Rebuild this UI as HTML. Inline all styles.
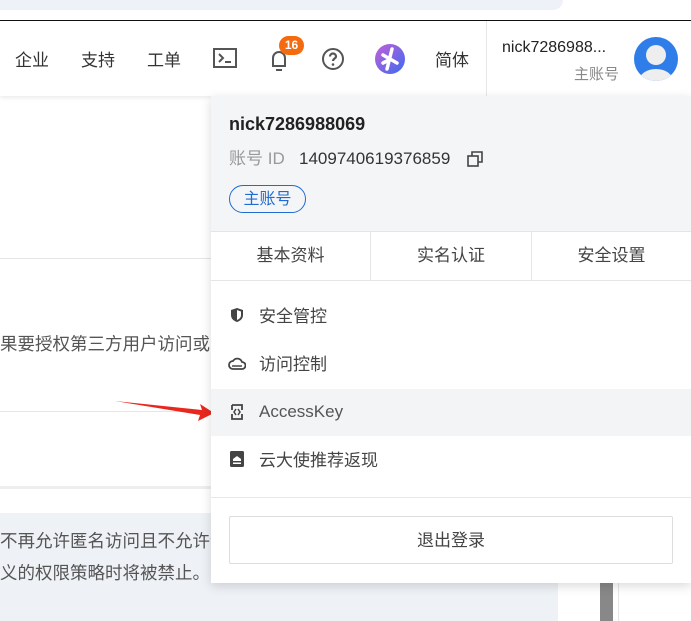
<!DOCTYPE html>
<html><head><meta charset="utf-8"><style>
*{margin:0;padding:0;box-sizing:border-box}
body{width:691px;height:621px;overflow:hidden;background:#fff;font-family:"Liberation Sans","Noto Sans CJK SC",sans-serif;position:relative;color:#333}
.a{position:absolute;line-height:1.2;white-space:nowrap}
.nav{font-size:17px;color:#333;top:51px}
</style></head><body>
<div class="a" style="left:0;top:0;width:563px;height:10px;background:#eef1f8;border-radius:0 0 12px 0"></div>
<div class="a" style="left:0;top:20px;width:691px;height:1px;background:#111"></div>
<div class="a" style="left:0;top:21px;width:691px;height:75px;background:#fff;box-shadow:0 2px 4px rgba(0,0,0,.08)"></div>
<div class="a nav" style="left:15px">企业</div>
<div class="a nav" style="left:81px">支持</div>
<div class="a nav" style="left:147px">工单</div>
<svg class="a" style="left:213px;top:48px" width="24" height="20" viewBox="0 0 24 20"><rect x="1" y="1" width="22" height="18" fill="none" stroke="#555" stroke-width="2"/><path d="M6 6l4 4-4 4M12 14h6" fill="none" stroke="#555" stroke-width="2"/></svg>
<svg class="a" style="left:269px;top:48px" width="20" height="24" viewBox="0 0 20 24"><path d="M4 18V10a6 6 0 0112 0v8H3h14" fill="none" stroke="#555" stroke-width="2"/><path d="M7 22h6" stroke="#555" stroke-width="2"/></svg>
<div class="a" style="left:279px;top:36px;width:25px;height:19px;border-radius:10px;background:#f36b0e;color:#fff;font-size:12px;font-weight:bold;text-align:center;line-height:19px">16</div>
<svg class="a" style="left:321px;top:47px" width="24" height="24" viewBox="0 0 24 24"><circle cx="12" cy="12" r="10" fill="none" stroke="#555" stroke-width="2"/><path d="M9 9.5a3 3 0 116 0c0 2-3 2-3 4.5" fill="none" stroke="#555" stroke-width="2.2"/><circle cx="12" cy="17.5" r="1.3" fill="#555"/></svg>
<svg class="a" style="left:375px;top:44px" width="30" height="30" viewBox="0 0 30 30"><defs><linearGradient id="g" x1="0" y1="0" x2="1" y2="1"><stop offset="0" stop-color="#c55ed8"/><stop offset="1" stop-color="#3a6cf0"/></linearGradient></defs><circle cx="15" cy="15" r="15" fill="url(#g)"/><path d="M17 5l-5 20M8 11l14 8M8 19l6-3" stroke="#fff" stroke-width="3.5" stroke-linecap="round"/></svg>
<div class="a nav" style="left:435px">简体</div>
<div class="a" style="left:486px;top:21px;width:1px;height:75px;background:#e8e8e8"></div>
<div class="a" style="left:502px;top:38px;font-size:16px;color:#222">nick7286988...</div>
<div class="a" style="left:574px;top:66px;font-size:15px;color:#888">主账号</div>
<svg class="a" style="left:634px;top:37px" width="44" height="44" viewBox="0 0 44 44"><defs><clipPath id="c"><circle cx="22" cy="22" r="22"/></clipPath></defs><circle cx="22" cy="22" r="22" fill="#2f7de9"/><g clip-path="url(#c)"><circle cx="22" cy="18" r="10" fill="#eee"/><ellipse cx="22" cy="44" rx="17" ry="12" fill="#eee"/></g></svg>

<div class="a" style="left:0;top:258px;width:211px;height:1px;background:#e5e5e5"></div>
<div class="a" style="left:0;top:334px;font-size:17.5px;color:#555">果要授权第三方用户访问或</div>
<div class="a" style="left:0;top:411px;width:211px;height:1px;background:#e5e5e5"></div>
<div class="a" style="left:0;top:486px;width:211px;height:3px;background:#eee"></div>
<div class="a" style="left:0;top:513px;width:558px;height:108px;background:#eef1f6"></div>
<div class="a" style="left:0;top:525px;font-size:17.5px;color:#555;line-height:32px">不再允许匿名访问且不允许创<br>义的权限策略时将被禁止。下</div>
<div class="a" style="left:600px;top:583px;width:13px;height:38px;background:#888"></div>
<div class="a" style="left:618px;top:583px;width:1px;height:38px;background:#e5e5e5"></div>
<svg class="a" style="left:110px;top:395px" width="105" height="30" viewBox="0 0 105 30"><path d="M5 6L92 15 90 9 104 18 88 26 90 20Z" fill="#e8281e"/></svg>

<div class="a" style="left:211px;top:96px;width:480px;height:487px;background:#fff;box-shadow:0 3px 10px rgba(0,0,0,.15)">
 <div class="a" style="left:0;top:0;width:480px;height:135px;background:#f4f5f7"></div>
 <div class="a" style="left:18px;top:18px;font-size:18px;font-weight:bold;color:#222">nick7286988069</div>
 <div class="a" style="left:18px;top:53px;font-size:17px;color:#999">账号 ID</div>
 <div class="a" style="left:88px;top:53px;font-size:17px;color:#333">1409740619376859</div>
 <svg class="a" style="left:256px;top:55px" width="16" height="16" viewBox="0 0 16 16"><rect x="1" y="5" width="10" height="10" fill="none" stroke="#444" stroke-width="1.6"/><path d="M5 5V1h10v10h-4" fill="none" stroke="#444" stroke-width="1.6"/></svg>
 <div class="a" style="left:18px;top:89px;width:77px;height:28px;border:1.3px solid #1f6bd1;border-radius:14px;color:#1f6bd1;font-size:16px;text-align:center;line-height:27px">主账号</div>
 <div class="a" style="left:0;top:135px;width:480px;height:50px;border-top:1px solid #e5e5e5;border-bottom:1px solid #e5e5e5"></div>
 <div class="a" style="left:159px;top:135px;width:1px;height:50px;background:#e5e5e5"></div>
 <div class="a" style="left:320px;top:135px;width:1px;height:50px;background:#e5e5e5"></div>
 <div class="a" style="left:0;top:150px;width:159px;text-align:center;font-size:17px;color:#444">基本资料</div>
 <div class="a" style="left:160px;top:150px;width:160px;text-align:center;font-size:17px;color:#444">实名认证</div>
 <div class="a" style="left:321px;top:150px;width:159px;text-align:center;font-size:17px;color:#444">安全设置</div>
 <svg class="a" style="left:18px;top:211px" width="16" height="16" viewBox="0 0 16 16"><path d="M8 1l6 2v5c0 4-3 6-6 7-3-1-6-3-6-7V3z" fill="#444"/><path d="M8 3v10c2-1 4-2 4-5V4.5z" fill="#fff"/></svg>
 <div class="a" style="left:48px;top:211px;font-size:17px;color:#444">安全管控</div>
 <svg class="a" style="left:17px;top:261px" width="18" height="14" viewBox="0 0 18 14"><path d="M5 12a4 4 0 010-8 5 5 0 019 1 3.5 3.5 0 010 7z" fill="none" stroke="#444" stroke-width="1.8"/><path d="M4 9h10" stroke="#444" stroke-width="1.5"/></svg>
 <div class="a" style="left:48px;top:259px;font-size:17px;color:#444">访问控制</div>
 <div class="a" style="left:0;top:293px;width:480px;height:47px;background:#f3f4f6"></div>
 <svg class="a" style="left:20px;top:308px" width="12" height="16" viewBox="0 0 12 16"><path d="M1 1h10v5M11 10v5H1v-5M1 6V1" fill="none" stroke="#444" stroke-width="1.8"/><path d="M5 5L3 8l2 3M7 5l2 3-2 3" fill="none" stroke="#444" stroke-width="1.5"/></svg>
 <div class="a" style="left:48px;top:306px;font-size:17px;color:#555">AccessKey</div>
 <svg class="a" style="left:19px;top:355px" width="14" height="16" viewBox="0 0 14 16"><rect x="0" y="0" width="14" height="16" rx="1.5" fill="#444"/><path d="M3 8l4-3 4 3v2H3z" fill="#fff"/><rect x="3" y="11.5" width="8" height="1.5" fill="#fff"/></svg>
 <div class="a" style="left:48px;top:355px;font-size:17px;color:#444">云大使推荐返现</div>
 <div class="a" style="left:0;top:401px;width:480px;height:1px;background:#e8e8e8"></div>
 <div class="a" style="left:18px;top:420px;width:444px;height:48px;border:1px solid #ddd;border-radius:2px;text-align:center;line-height:48px;font-size:17px;color:#444">退出登录</div>
</div>
</body></html>
